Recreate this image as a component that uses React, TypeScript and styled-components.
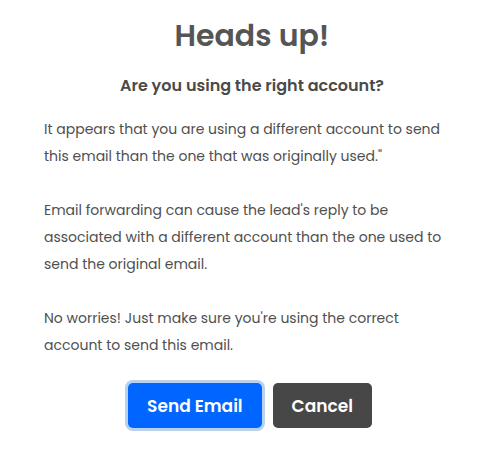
import styled, { createGlobalStyle } from 'styled-components';

const GlobalStyle = createGlobalStyle`
  body {
    margin: 0;
    background: #ffffff;
    font-family: Poppins, 'Open Sans', 'Liberation Sans', sans-serif;
  }
`;

const Modal = styled.div`
  width: 504px;
  height: 451px;
  box-sizing: border-box;
  padding: 14px 44px 0;
  display: flex;
  flex-direction: column;
  align-items: center;
  color: #4a4a4a;
`;

const Title = styled.h1`
  margin: 0;
  font-size: 30px;
  line-height: 44px;
  font-weight: 600;
  color: #555555;
`;

const Subtitle = styled.h2`
  margin: 16px 0 0;
  font-size: 16px;
  line-height: 24px;
  font-weight: 600;
  color: #4a4a4a;
`;

const Body = styled.div`
  align-self: stretch;
  margin-top: 18px;
  display: flex;
  flex-direction: column;
  gap: 27px;
`;

const Paragraph = styled.p`
  margin: 0;
  font-size: 14px;
  line-height: 27px;
  white-space: nowrap;
  color: #4f4f4f;
`;

const Actions = styled.div`
  margin-top: 24px;
  margin-right: 4px;
  display: flex;
  gap: 11px;
`;

const Button = styled.button<{ $primary?: boolean }>`
  border: none;
  border-radius: 5px;
  height: 45px;
  padding: 0 19px;
  font-family: inherit;
  font-size: 17px;
  font-weight: 600;
  color: #ffffff;
  cursor: pointer;
  background: ${(p) => (p.$primary ? '#0066ff' : '#474747')};
  box-shadow: ${(p) => (p.$primary ? '0 0 0 3px #b8d1ec' : 'none')};
`;

export default function App() {
  return (
    <>
      <GlobalStyle />
      <Modal>
        <Title>Heads up!</Title>
        <Subtitle>Are you using the right account?</Subtitle>
        <Body>
          <Paragraph>
            It appears that you are using a different account to send
            <br />
            this email than the one that was originally used."
          </Paragraph>
          <Paragraph>
            Email forwarding can cause the lead's reply to be
            <br />
            associated with a different account than the one used to
            <br />
            send the original email.
          </Paragraph>
          <Paragraph>
            No worries! Just make sure you're using the correct
            <br />
            account to send this email.
          </Paragraph>
        </Body>
        <Actions>
          <Button $primary>Send Email</Button>
          <Button>Cancel</Button>
        </Actions>
      </Modal>
    </>
  );
}
